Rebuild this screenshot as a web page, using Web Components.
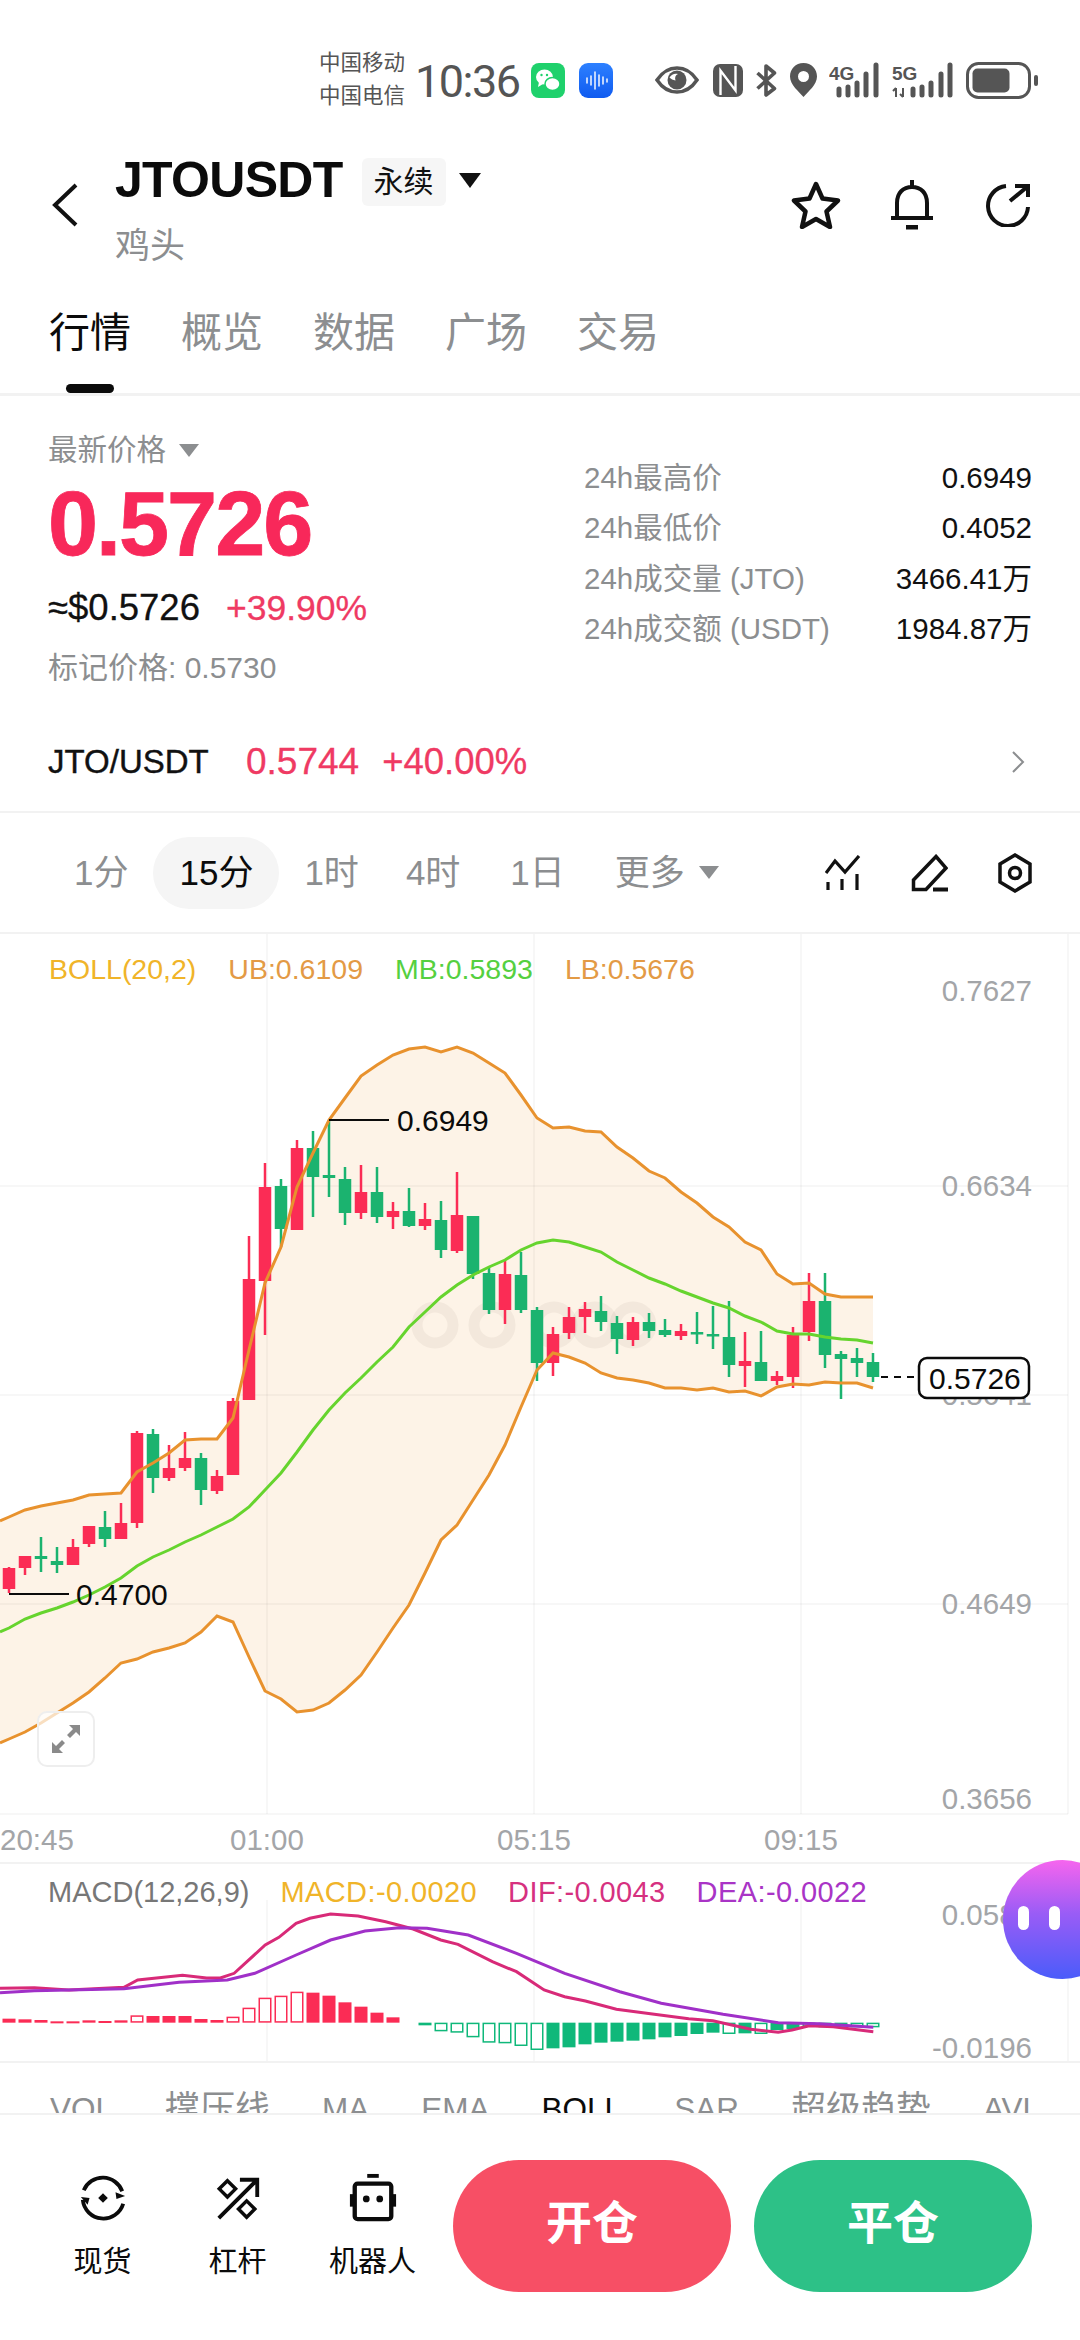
<!DOCTYPE html>
<html lang="zh">
<head>
<meta charset="utf-8">
<title>JTOUSDT</title>
<style>
  html, body { margin: 0; padding: 0; background: #fff; }
  body {
    position: relative;
    width: 1080px;
    height: 2340px;
    overflow: hidden;
    font-family: "Liberation Sans", "Noto Sans CJK SC", sans-serif;
    color: #111;
  }
</style>
</head>
<body>
<status-bar></status-bar>
<title-bar></title-bar>
<nav-tabs></nav-tabs>
<price-panel></price-panel>
<spot-link></spot-link>
<period-bar></period-bar>
<kline-chart></kline-chart>
<macd-panel></macd-panel>
<indicator-tabs></indicator-tabs>
<action-bar></action-bar>
<chat-bubble></chat-bubble>

<script>
const FONT = '"Liberation Sans", "Noto Sans CJK SC", sans-serif';

// Base class: set the shadow root from a render() string
class Panel extends HTMLElement {
  connectedCallback() {
    this.attachShadow({ mode: 'open' });
    this.shadowRoot.innerHTML = this.render();
  }
}

class StatusBar extends Panel {
  render() {
    return `
      <style>
        :host { display: flex; align-items: center; height: 120px; padding: 40px 0 0 319px; box-sizing: border-box; color: #555; }
        .carriers { width: 87px; font-size: 21.500px; line-height: 33px; white-space: nowrap; }
        .time { font-family: Roboto, sans-serif; font-size: 45px; margin: 2px 12px 0 9px; width: 104px; letter-spacing: -1.5px; white-space: nowrap; }
        svg { display: block; flex: none; }
        .sig text { font-family: ${FONT}; font-size: 19px; font-weight: 700; fill: #555; }
      </style>
      <div class="carriers"><div>中国移动</div><div>中国电信</div></div>
      <div class="time">10:36</div>
      <svg width="34" height="35" viewBox="0 0 34 35">
        <rect width="34" height="35" rx="8" fill="#1fd16c"/>
        <ellipse cx="13.5" cy="14" rx="8.5" ry="7.5" fill="#fff"/>
        <path d="M8 19l-1 5 5-3z" fill="#fff"/>
        <ellipse cx="21.5" cy="21" rx="7.5" ry="6.5" fill="#fff" stroke="#1fd16c" stroke-width="1.5"/>
        <circle cx="10.5" cy="12" r="1.2" fill="#1fd16c"/><circle cx="16" cy="12" r="1.2" fill="#1fd16c"/>
      </svg>
      <svg style="margin-left:14px" width="34" height="35" viewBox="0 0 34 35">
        <defs><linearGradient id="vb" x1="0" y1="0" x2="0" y2="1"><stop offset="0" stop-color="#2d80ff"/><stop offset="1" stop-color="#0f5bf0"/></linearGradient></defs>
        <rect width="34" height="35" rx="9" fill="url(#vb)"/>
        <path d="M8 15v5M12 13v9M16 9v17M20 12v11M24 14v7M28 16v3" stroke="#fff" stroke-width="1.6" stroke-linecap="round" opacity=".9"/>
      </svg>
      <svg style="margin-left:42px" width="44" height="28" viewBox="0 0 44 28">
        <path d="M2 14C8 5 14 2 22 2s14 3 20 12c-6 9-12 12-20 12S8 23 2 14z" fill="none" stroke="#555" stroke-width="3.500"/>
        <circle cx="22" cy="14" r="9.500" fill="#555"/>
        <path d="M14.500 11.500c2-3.500 5.500-4.500 8.500-3.500-2.500 1-3.500 3.500-2.500 6.500-2.500-.5-4.500-1.500-6-3z" fill="#fff"/>
      </svg>
      <svg style="margin-left:14px" width="30" height="33" viewBox="0 0 30 33">
        <rect width="30" height="33" rx="7" fill="#555"/>
        <path d="M7.500 31V6.500L22.500 26.500V2" fill="none" stroke="#fff" stroke-width="2.400"/>
      </svg>
      <svg style="margin-left:12px" width="22" height="33" viewBox="0 0 22 33">
        <path d="M2.500 9l17 15.500-8.500 6.500V2l8.500 7L2.500 24.500" fill="none" stroke="#555" stroke-width="3.600" stroke-linejoin="round"/>
      </svg>
      <svg style="margin-left:13px" width="27" height="34" viewBox="0 0 27 34">
        <path fill-rule="evenodd" d="M13.500 0C5.500 0 0 6 0 13.500c0 8.500 9 15 13.500 20.500C18 28.500 27 22 27 13.500 27 6 21.500 0 13.500 0zm0 8a5.500 5.500 0 1 1 0 11 5.500 5.500 0 0 1 0-11z" fill="#555"/>
      </svg>
      <svg class="sig" style="margin-left:12px" width="50" height="36" viewBox="0 0 50 36">
        <text x="0" y="18">4G</text>
        <path d="M10 27v6M19 25v8M28 21v12M37 12v21M47 3v30" stroke="#555" stroke-width="5" stroke-linecap="round"/>
      </svg>
      <svg class="sig" style="margin-left:12px" width="62" height="36" viewBox="0 0 62 36">
        <text x="1" y="18">5G</text>
        <path d="M5 26v9M2 29l3-3M12 26v9M9 32l3 3" fill="none" stroke="#555" stroke-width="2"/>
        <path d="M22 27v6M31 25v8M40 21v12M50 12v21M59 3v30" stroke="#555" stroke-width="5" stroke-linecap="round"/>
      </svg>
      <svg style="margin-left:13px" width="73" height="37" viewBox="0 0 73 37">
        <rect x="1.500" y="1.500" width="62" height="34" rx="11" fill="none" stroke="#555" stroke-width="3"/>
        <rect x="6.500" y="6.500" width="37" height="24" rx="5" fill="#555"/>
        <rect x="68" y="13" width="4" height="11" rx="2" fill="#555"/>
      </svg>
    `;
  }
}

class TitleBar extends Panel {
  render() {
    return `
      <style>
        :host { display: flex; height: 170px; box-sizing: border-box; padding: 0 50px 0 52px; }
        svg { display: block; flex: none; }
        .back { align-self: center; margin-right: 37px; }
        .col { padding-top: 35px; }
        .row { display: flex; align-items: center; height: 50px; }
        h1 { margin: 0; font-size: 50px; line-height: 50px; font-weight: 700; letter-spacing: -.7px; color: #0b0b0b; }
        .tag { margin-left: 19px; width: 84px; height: 48px; line-height: 48px; text-align: center; background: #f6f6f6; border-radius: 6px; font-size: 30px; margin-top: 4px; }
        .caret { margin-left: 13px; }
        .sub { margin-top: 20px; font-size: 35px; line-height: 42px; color: #8c8e90; }
        .icons { margin-left: auto; align-self: center; display: flex; align-items: center; gap: 50px; }
        .share { margin-left: 3px; }
      </style>
      <svg class="back" width="26" height="44" viewBox="0 0 26 44"><path d="M24 2L3 22l21 20" fill="none" stroke="#111" stroke-width="4"/></svg>
      <div class="col">
        <div class="row">
          <h1>JTOUSDT</h1>
          <span class="tag">永续</span>
          <svg class="caret" width="22" height="15" viewBox="0 0 22 15"><path d="M0 0h22L11 15z" fill="#111"/></svg>
        </div>
        <div class="sub">鸡头</div>
      </div>
      <div class="icons">
        <svg width="50" height="48" viewBox="0 0 50 48"><path d="M25 3l6.500 14.500L47 19.500 35.500 30.500 39 46 25 38 11 46l3.500-15.500L3 19.500l15.500-2z" fill="none" stroke="#111" stroke-width="4.500" stroke-linejoin="round"/></svg>
        <svg width="42" height="50" viewBox="0 0 42 50"><path d="M21 0v7M6 38V23C6 13 12 7 21 7s15 6 15 16v15M0 38h42" fill="none" stroke="#111" stroke-width="4"/><rect x="15" y="45" width="12" height="4.500" fill="#111"/></svg>
        <svg class="share" width="44" height="44" viewBox="0 0 44 44"><path d="M20 3A20 20 0 1 0 42 24M24 18L41 4M29 3h13v11" fill="none" stroke="#111" stroke-width="4"/></svg>
      </div>
    `;
  }
}

class NavTabs extends Panel {
  render() {
    const tabs = ['行情', '概览', '数据', '广场', '交易'];
    return `
      <style>
        :host { display: flex; gap: 50px; height: 106px; box-sizing: border-box; padding: 18px 0 0 49px; border-bottom: 3px solid #f2f2f2; }
        span { position: relative; font-size: 41px; line-height: 50px; color: #8c8e90; height: 50px; }
        .on { color: #0b0b0b; }
        .on::after { content: ""; position: absolute; left: 17px; top: 76px; width: 48px; height: 9px; border-radius: 5px; background: #0b0b0b; }
      </style>
      ${tabs.map((t, i) => `<span class="${i === 0 ? 'on' : ''}">${t}</span>`).join('')}
    `;
  }
}

class PricePanel extends Panel {
  render() {
    const stats = [
      ['24h最高价', '0.6949'],
      ['24h最低价', '0.4052'],
      ['24h成交量 (JTO)', '3466.41万'],
      ['24h成交额 (USDT)', '1984.87万'],
    ];
    return `
      <style>
        :host { display: flex; height: 316px; box-sizing: border-box; padding: 36px 48px 0 48px; }
        .left { width: 536px; flex: none; }
        .label { display: flex; align-items: center; font-size: 29.500px; line-height: 36px; color: #8c8e90; }
        .label svg { margin-left: 13px; }
        .big { font-size: 90px; line-height: 100px; font-weight: 700; color: #f8285a; letter-spacing: -2px; margin-top: 6px; -webkit-text-stroke: .8px #f8285a; }
        .chg { display: flex; font-size: 36.500px; line-height: 50px; margin-top: 9px; -webkit-text-stroke: .3px currentColor; }
        .chg b { font-weight: 400; font-size: 35.500px; color: #ef3a63; margin-left: 26px; }
        .mark { font-size: 30px; line-height: 40px; color: #8c8e90; margin-top: 15px; }
        .right { flex: 1; padding-top: 21px; }
        .stat { display: flex; justify-content: space-between; height: 50.400px; line-height: 50px; font-size: 29.500px; color: #8c8e90; }
        .stat b { font-weight: 400; color: #111; font-size: 29.500px; }
      </style>
      <div class="left">
        <div class="label">最新价格<svg width="20" height="13" viewBox="0 0 20 13"><path d="M0 0h20L10 13z" fill="#8c8e90"/></svg></div>
        <div class="big">0.5726</div>
        <div class="chg">≈$0.5726<b>+39.90%</b></div>
        <div class="mark">标记价格: 0.5730</div>
      </div>
      <div class="right">
        ${stats.map(s => `<div class="stat"><span>${s[0]}</span><b>${s[1]}</b></div>`).join('')}
      </div>
    `;
  }
}

class SpotLink extends Panel {
  render() {
    return `
      <style>
        :host { display: flex; align-items: center; height: 99px; padding: 0 55px 0 48px; border-bottom: 2px solid #f2f2f2; }
        .pair { font-size: 33px; color: #111; width: 198px; -webkit-text-stroke: .4px #111; }
        .p { font-size: 37px; color: #ef3a63; -webkit-text-stroke: .3px #ef3a63; }
        .c { font-size: 36.500px; color: #ef3a63; margin-left: 23px; -webkit-text-stroke: .3px #ef3a63; }
        svg { margin-left: auto; }
      </style>
      <span class="pair">JTO/USDT</span>
      <span class="p">0.5744</span>
      <span class="c">+40.00%</span>
      <svg width="14" height="24" viewBox="0 0 14 24"><path d="M2 2l10 10L2 22" fill="none" stroke="#8c8e90" stroke-width="2"/></svg>
    `;
  }
}

class PeriodBar extends Panel {
  render() {
    return `
      <style>
        :host { display: flex; align-items: center; height: 119px; padding: 0 48px 0 49px; border-bottom: 2px solid #f2f2f2; }
        span { font-size: 35px; line-height: 72px; padding: 0 25px; color: #8c8e90; white-space: nowrap; }
        .on { color: #0b0b0b; background: #f5f5f5; border-radius: 36px; padding: 0 26px; margin-right: 0; }
        .tight { margin-left: -3px; }
        .car { margin-left: -11px; }
        .icons { margin-left: auto; display: flex; gap: 50px; align-items: center; }
        svg { display: block; flex: none; }
      </style>
      <span>1分</span>
      <span class="on">15分</span>
      <span>1时</span>
      <span class="tight">4时</span>
      <span>1日</span>
      <span>更多</span>
      <svg class="car" width="20" height="13" viewBox="0 0 20 13"><path d="M0 0h20L10 13z" fill="#8c8e90"/></svg>
      <div class="icons">
        <svg width="36" height="36" viewBox="0 0 36 36"><path d="M1 18L10 6l10 11L34 1M3 27v8M17 24v11M32 19v16" fill="none" stroke="#111" stroke-width="3.200"/></svg>
        <svg width="37" height="38" viewBox="0 0 37 38"><path d="M25 2.500L35 14 15 35.500H2.500V26z" fill="none" stroke="#111" stroke-width="3.500"/><path d="M22 35.500h15" stroke="#111" stroke-width="4"/></svg>
        <svg width="34" height="40" viewBox="0 0 34 40"><path d="M17 2l15 9v18l-15 9-15-9V11z" fill="none" stroke="#111" stroke-width="3.500"/><circle cx="17" cy="20" r="5.500" fill="none" stroke="#111" stroke-width="3.500"/></svg>
      </div>
    `;
  }
}

// [wickTop, wickBottom, bodyTop, bodyBottom, up?] in page pixels; candle n sits at x = 9 + 16n
const CANDLES = [
  [1567,1593,1568,1589,1],[1556,1575,1556,1568,1],[1537,1572,1556,1559,0],[1547,1573,1561,1565,0],
  [1539,1565,1547,1565,1],[1526,1547,1526,1544,1],[1511,1547,1527,1539,0],[1503,1539,1523,1539,1],
  [1431,1528,1433,1523,1],[1429,1493,1434,1478,0],[1445,1481,1468,1478,1],[1432,1471,1458,1468,1],
  [1453,1505,1458,1490,0],[1470,1494,1476,1491,1],[1398,1475,1401,1475,1],[1236,1400,1279,1400,1],
  [1163,1335,1187,1281,1],[1179,1247,1186,1229,0],[1140,1230,1148,1230,1],[1131,1217,1148,1177,0],
  [1120,1197,1175,1178,0],[1167,1225,1179,1213,0],[1165,1219,1192,1213,1],[1167,1223,1192,1217,0],
  [1202,1229,1211,1217,1],[1188,1227,1211,1226,0],[1203,1230,1219,1226,1],[1201,1258,1220,1250,0],
  [1172,1253,1215,1251,1],[1216,1279,1216,1274,0],[1267,1314,1273,1310,0],[1260,1324,1274,1310,1],
  [1252,1313,1275,1310,0],[1307,1381,1310,1363,0],[1327,1376,1334,1363,1],[1307,1339,1317,1333,1],
  [1302,1333,1309,1317,1],[1296,1331,1311,1322,0],[1316,1354,1323,1339,0],[1317,1346,1322,1340,1],
  [1313,1338,1322,1331,0],[1319,1337,1330,1335,0],[1324,1340,1331,1336,1],[1312,1344,1332,1334,0],
  [1306,1349,1334,1335,0],[1301,1377,1337,1365,0],[1332,1387,1361,1366,1],[1331,1381,1362,1381,0],
  [1371,1385,1376,1381,1],[1327,1388,1335,1377,1],[1273,1341,1301,1332,1],[1273,1368,1301,1355,0],
  [1351,1399,1354,1359,0],[1348,1377,1358,1363,0],[1353,1382,1362,1377,0],
];
const UB = [1517,1510,1506,1503,1500,1495,1494,1493,1472,1463,1453,1440,1439,1439,1418,1350,1283,1247,1187,1153,1120,1098,1076,1065,1055,1049,1047,1052,1047,1053,1063,1073,1095,1118,1128,1127,1131,1132,1147,1158,1171,1178,1192,1203,1217,1227,1242,1250,1274,1284,1283,1294,1297,1297,1297];
const MB = [1628,1619,1613,1608,1602,1595,1587,1578,1566,1557,1550,1542,1535,1527,1519,1507,1490,1473,1452,1430,1410,1393,1378,1362,1347,1327,1312,1297,1285,1275,1267,1260,1250,1243,1240,1242,1247,1252,1262,1270,1278,1284,1291,1297,1303,1308,1316,1322,1331,1334,1334,1337,1339,1340,1343];
const LB = [1739,1732,1723,1713,1703,1692,1678,1663,1659,1652,1648,1643,1632,1616,1622,1657,1691,1699,1712,1710,1703,1690,1675,1652,1628,1605,1573,1540,1525,1500,1475,1445,1407,1370,1353,1357,1363,1373,1378,1380,1383,1388,1388,1390,1388,1392,1391,1396,1387,1384,1385,1382,1383,1383,1388];

const pts = arr => arr.map((y, n) => `${9 + 16 * n},${y}`);

class KlineChart extends Panel {
  render() {
    const ub = pts(UB), lb = pts(LB), mb = pts(MB);
    const grid = [267, 534, 801, 1068].map(x => `<line x1="${x}" y1="934" x2="${x}" y2="1814"/>`).join('')
      + [1186, 1395, 1604, 1814].map(y => `<line x1="0" y1="${y}" x2="1068" y2="${y}"/>`).join('');
    const candles = CANDLES.map((c, n) => {
      const x = 9 + 16 * n, col = c[4] ? '#fb2c55' : '#1bb36f';
      return `<rect x="${x - 1.25}" y="${c[0]}" width="2.500" height="${c[1] - c[0]}" fill="${col}"/>`
        + `<rect x="${x - 6.25}" y="${c[2]}" width="12.500" height="${Math.max(c[3] - c[2], 2.5)}" fill="${col}"/>`;
    }).join('');
    const rings = [435, 492, 554, 595, 633].map(x => `<circle cx="${x}" cy="1325" r="18"/>`).join('');
    const yLabels = [['0.7627', 1001], ['0.6634', 1195.5], ['0.5641', 1405], ['0.4649', 1613.5], ['0.3656', 1808.5]]
      .map(l => `<text class="axis" x="1032" y="${l[1]}" text-anchor="end">${l[0]}</text>`).join('');
    const xLabels = [['20:45', 0], ['01:00', 230], ['05:15', 497], ['09:15', 764]]
      .map(l => `<text class="axis" x="${l[1]}" y="1850">${l[0]}</text>`).join('');
    return `
      <style>
        :host { display: block; position: relative; height: 928px; border-bottom: 2px solid #f2f2f2; overflow: hidden; }
        .legend { position: relative; z-index: 1; display: flex; gap: 32px; padding: 17px 0 0 49px; font-size: 28.500px; line-height: 36px; white-space: nowrap; }
        svg.plot { position: absolute; left: 0; top: 0; }
        text { font-family: ${FONT}; font-size: 30px; }
        .axis { font-size: 29.500px; fill: #a3a5a8; }
        .mark { fill: #0b0b0b; }
        .expand { position: absolute; left: 37px; top: 777px; width: 58px; height: 56px; box-sizing: border-box; border: 2px solid #eeeeee; border-radius: 10px; background: rgba(255,255,255,.7); display: flex; align-items: center; justify-content: center; }
      </style>
      <svg class="plot" width="1080" height="928" viewBox="0 934 1080 928">
        <polygon points="${ub.join(' ')} ${lb.slice().reverse().join(' ')} 0,1743 0,1521" fill="#fdf3e7"/>
        <g stroke="rgba(0,0,0,.045)" stroke-width="1.500">${grid}</g>
        <g fill="none" stroke="rgba(120,100,80,.07)" stroke-width="11">${rings}</g>
        ${candles}
        <polyline points="0,1521 ${ub.join(' ')}" fill="none" stroke="#e8922e" stroke-width="3"/>
        <polyline points="0,1743 ${lb.join(' ')}" fill="none" stroke="#e8922e" stroke-width="3"/>
        <polyline points="0,1632 ${mb.join(' ')}" fill="none" stroke="#66d42e" stroke-width="3"/>
        <line x1="329" y1="1120" x2="389" y2="1120" stroke="#0b0b0b" stroke-width="2"/>
        <text class="mark" x="397" y="1131">0.6949</text>
        <line x1="9" y1="1594" x2="69" y2="1594" stroke="#0b0b0b" stroke-width="2"/>
        <text class="mark" x="76" y="1605">0.4700</text>
        ${yLabels}
        ${xLabels}
        <line x1="881" y1="1377" x2="915" y2="1377" stroke="#0b0b0b" stroke-width="2" stroke-dasharray="7 6"/>
        <rect x="919" y="1358" width="110" height="40" rx="8" fill="#fff" stroke="#0b0b0b" stroke-width="2.500"/>
        <text class="mark" x="929" y="1389">0.5726</text>
      </svg>
      <div class="legend">
        <span style="color:#f0b429">BOLL(20,2)</span>
        <span style="color:#e39a45">UB:0.6109</span>
        <span style="color:#55d040">MB:0.5893</span>
        <span style="color:#e39a45">LB:0.5676</span>
      </div>
      <div class="expand">
        <svg width="30" height="30" viewBox="0 0 30 30"><path d="M18 1h11v11l-4-4-6 6-3-3 6-6zM12 29H1V18l4 4 6-6 3 3-6 6z" fill="#8a8a8a"/></svg>
      </div>
    `;
  }
}

// Zoomed readings of the two MACD lines, turned into page pixels below
const DIF = [[0,475],[50,473],[100,480],[180,472],[200,450],[265,436],[300,444],[320,444],[340,430],[385,345],[405,322],[430,280],[450,265],[480,252],[520,258],[560,275],[600,297],[640,330],[665,343],[715,395],[750,425],[790,480],[820,500],[850,513],[895,538],[950,553],[1000,566],[1035,572],[1090,598],[1130,607],[1150,600],[1175,587],[1210,590],[1268,605]];
const DEA = [[0,488],[50,482],[100,480],[180,476],[260,457],[330,450],[370,430],[430,375],[480,330],[530,303],[580,293],[620,295],[680,315],[750,370],[820,430],[900,485],[960,520],[1050,553],[1130,578],[1190,581],[1268,592]];
// Histogram tips per bar, 578 is the zero line; null means no bar
const HIST = [566,568,570,574,574,571,573,571,556,558,558,558,567,570,560,533,503,497,485,488,497,517,530,548,562,null,586,604,608,622,638,640,648,660,655,652,643,638,635,632,628,622,618,612,608,612,610,612,600,597,590,592,590,592,592];
const HOLLOW = [3,4,5,6,7,8,14,15,16,17,18,27,28,29,30,31,32,33,45,47,50,51,52,53,54];

class MacdPanel extends Panel {
  render() {
    const line = arr => arr.map(p => `${(p[0] / 1.452).toFixed(1)},${(1830 + p[1] / 3).toFixed(1)}`).join(' ');
    const base = 1830 + 578 / 3;
    const bars = HIST.map((z, n) => {
      if (z === null) return '';
      const y = 1830 + z / 3, top = Math.min(y, base), h = Math.max(Math.abs(y - base), 1.5);
      const col = z < 578 ? '#fb2c55' : '#0fb87a', x = 9 + 16 * n - 6.5;
      return HOLLOW.includes(n)
        ? `<rect x="${x + .75}" y="${top + .75}" width="11.500" height="${Math.max(h - 1.5, .5)}" fill="#fff" stroke="${col}" stroke-width="1.500"/>`
        : `<rect x="${x}" y="${top}" width="13" height="${h}" fill="${col}"/>`;
    }).join('');
    const grid = [267, 534, 801, 1068].map(x => `<line x1="${x}" y1="1900" x2="${x}" y2="2062"/>`).join('');
    return `
      <style>
        :host { display: block; position: relative; height: 197px; border-bottom: 2px solid #f2f2f2; }
        .legend { position: relative; display: flex; gap: 31px; padding: 10px 0 0 48px; font-size: 29px; line-height: 36px; white-space: nowrap; }
        .legend .w { letter-spacing: .4px; }
        svg { position: absolute; left: 0; top: 0; }
        text { font-family: ${FONT}; font-size: 29.500px; fill: #a3a5a8; }
      </style>
      <svg width="1080" height="197" viewBox="0 1864 1080 197">
        <g stroke="rgba(0,0,0,.045)" stroke-width="1.500">${grid}</g>
        ${bars}
        <polyline points="${line(DIF)}" fill="none" stroke="#d82a78" stroke-width="3"/>
        <polyline points="${line(DEA)}" fill="none" stroke="#a030c8" stroke-width="3"/>
        <text x="1032" y="1925" text-anchor="end">0.0587</text>
        <text x="1032" y="2058" text-anchor="end">-0.0196</text>
      </svg>
      <div class="legend">
        <span style="color:#777">MACD(12,26,9)</span>
        <span class="w" style="color:#f0b429">MACD:-0.0020</span>
        <span class="w" style="color:#d6317f">DIF:-0.0043</span>
        <span class="w" style="color:#a934c6">DEA:-0.0022</span>
      </div>
    `;
  }
}

class IndicatorTabs extends Panel {
  render() {
    return `
      <style>
        :host { display: block; height: 50px; overflow: hidden; }
        .row { display: flex; gap: 52px; width: 1033px; overflow: hidden; box-sizing: border-box; padding: 21px 0 0 50px; white-space: nowrap; font-size: 35px; line-height: 50px; color: #8c8e90; }
        .l { font-size: 31.500px; }
        .on { color: #0b0b0b; }
        span { flex: none; }
      </style>
      <div class="row">
        <span class="l">VOL</span>
        <span>撑压线</span>
        <span class="l">MA</span>
        <span class="l">EMA</span>
        <span class="l on">BOLL</span>
        <span class="l">SAR</span>
        <span>超级趋势</span>
        <span class="l">AVL</span>
      </div>
    `;
  }
}

class ActionBar extends Panel {
  render() {
    return `
      <style>
        :host { display: flex; height: 227px; box-sizing: border-box; padding: 45px 48px 0 35px; border-top: 2px solid #f2f2f2; background: #fff; }
        .tool { width: 135px; display: flex; flex-direction: column; align-items: center; padding-top: 13px; }
        .tool svg { display: block; height: 50px; width: 52px; }
        .tool span { margin-top: 21px; font-size: 29px; line-height: 36px; color: #0b0b0b; white-space: nowrap; }
        .btn { width: 278px; height: 132px; border-radius: 66px; line-height: 126px; text-align: center; color: #fff; font-size: 46px; font-weight: 700; }
        .open { background: #f74f65; margin-left: 13px; }
        .close { background: #2dc187; margin-left: 23px; }
      </style>
      <div class="tool">
        <svg viewBox="0 0 52 52">
          <path d="M6 18A21.500 21.500 0 0 1 46 19M47 32A21.500 21.500 0 0 1 5 28" fill="none" stroke="#0b0b0b" stroke-width="4"/>
          <path d="M49 24l-9 3-1-7zM3 25l9 1-2 7z" fill="#0b0b0b"/>
          <path d="M26 21l5 5-5 5-5-5z" fill="#0b0b0b"/>
        </svg>
        <span>现货</span>
      </div>
      <div class="tool">
        <svg viewBox="0 0 52 52">
          <path d="M6 47L46 7M28 7h18v18" fill="none" stroke="#0b0b0b" stroke-width="4"/>
          <path d="M15 8l8.500 8.500-8.500 8.500-8.500-8.500zM35 29l8.500 8.500L35 46l-8.500-8.500z" fill="none" stroke="#0b0b0b" stroke-width="3.600"/>
        </svg>
        <span>杠杆</span>
      </div>
      <div class="tool">
        <svg viewBox="0 0 52 52">
          <rect x="20" y="1" width="12" height="4" fill="#0b0b0b"/>
          <rect x="7" y="11" width="38" height="37" rx="3" fill="none" stroke="#0b0b0b" stroke-width="4.500"/>
          <rect x="2" y="22" width="4" height="13" fill="#0b0b0b"/><rect x="46" y="22" width="4" height="13" fill="#0b0b0b"/>
          <circle cx="19" cy="27" r="3.500" fill="#0b0b0b"/><circle cx="33" cy="27" r="3.500" fill="#0b0b0b"/>
        </svg>
        <span>机器人</span>
      </div>
      <div class="btn open">开仓</div>
      <div class="btn close">平仓</div>
    `;
  }
}

class ChatBubble extends Panel {
  render() {
    return `
      <style>
        :host { position: absolute; left: 1003px; top: 1860px; width: 119px; height: 119px; border-radius: 50%; background: linear-gradient(180deg, #f665ee 0%, #9a5cf6 45%, #4a5cfa 100%); }
        i { position: absolute; top: 46px; width: 11px; height: 24px; border-radius: 6px; background: #fff; }
      </style>
      <i style="left:15px"></i>
      <i style="left:46px"></i>
    `;
  }
}

customElements.define('status-bar', StatusBar);
customElements.define('title-bar', TitleBar);
customElements.define('nav-tabs', NavTabs);
customElements.define('price-panel', PricePanel);
customElements.define('spot-link', SpotLink);
customElements.define('period-bar', PeriodBar);
customElements.define('kline-chart', KlineChart);
customElements.define('macd-panel', MacdPanel);
customElements.define('indicator-tabs', IndicatorTabs);
customElements.define('action-bar', ActionBar);
customElements.define('chat-bubble', ChatBubble);
</script>
</body>
</html>
